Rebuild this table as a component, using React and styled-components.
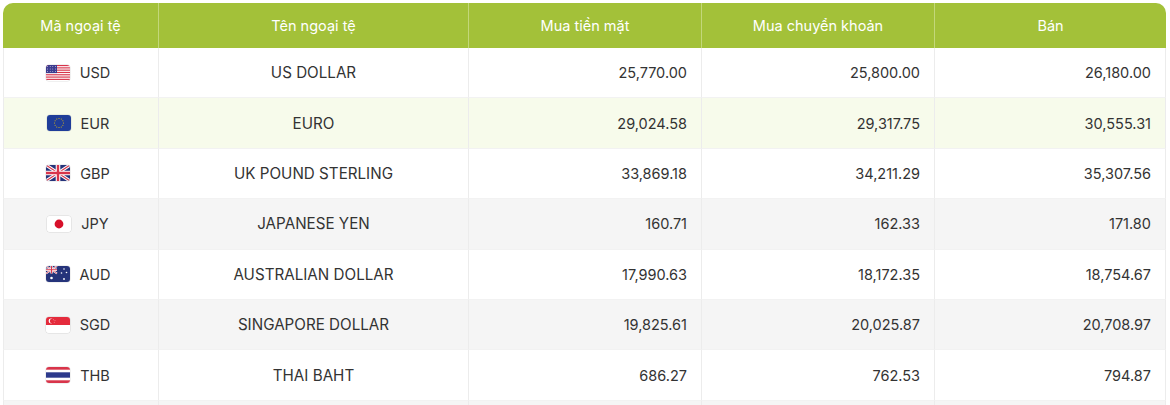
import React from 'react';
import styled, { createGlobalStyle } from 'styled-components';

const GlobalStyle = createGlobalStyle`
    body {
        margin: 0;
        background: #ffffff;
        font-family: Inter, "Noto Sans", sans-serif;
        overflow: hidden;
    }
`;

const Wrapper = styled.div`
    padding: 3px 4px 0 3px;
`;

const Table = styled.table`
    width: 100%;
    border-collapse: separate;
    border-spacing: 0;
    table-layout: fixed;
    color: #333333;
    font-size: 14.5px;
`;

const Th = styled.th`
    background: #a3c139;
    color: #ffffff;
    font-weight: 400;
    height: 45px;
    padding: 0 12px;
    text-align: center;
    border-left: 1px solid #c3d77a;

    &:first-child {
        border-left: none;
        border-top-left-radius: 10px;
    }
    &:last-child {
        border-top-right-radius: 10px;
    }
`;

const Row = styled.tr`
    background: ${(p) => p.$bg};
`;

const Td = styled.td`
    height: 50.4px;
    padding: 0 14px;
    text-align: ${(p) => (p.$right ? 'right' : 'center')};
    font-size: ${(p) => (p.$wide ? '15.2px' : '14.5px')};
    border-left: 1px solid #ececec;
    border-bottom: 1px solid #f2f2f2;
    box-sizing: border-box;

    &:last-child {
        border-right: 1px solid #ececec;
    }
`;

const Code = styled.div`
    display: flex;
    align-items: center;
    justify-content: center;
    gap: 10px;
    padding-right: 6px;
`;

const FlagBox = styled.span`
    width: 24px;
    height: 16px;
    border-radius: 3px;
    overflow: hidden;
    display: inline-flex;
    box-shadow: 0 0 0 0.5px rgba(0, 0, 0, 0.12);

    svg {
        width: 24px;
        height: 16px;
        display: block;
    }
`;

const Us = () => (
    <svg viewBox="0 0 24 16">
        {Array.from({ length: 7 }).map((_, i) => (
            <rect key={i} x="0" y={i * 2.3} width="24" height="1.15" fill="#d8344a" />
        ))}
        <rect x="0" y="0" width="11" height="8.1" fill="#3c3b8f" />
        {Array.from({ length: 12 }).map((_, i) => (
            <circle key={i} cx={1.6 + (i % 4) * 2.6} cy={1.5 + Math.floor(i / 4) * 2.5} r="0.45" fill="#fff" />
        ))}
    </svg>
);

const Eu = () => (
    <svg viewBox="0 0 24 16">
        <rect width="24" height="16" fill="#1f3d99" />
        {Array.from({ length: 12 }).map((_, i) => {
            const a = (i / 12) * Math.PI * 2;
            return <circle key={i} cx={12 + Math.cos(a) * 4.5} cy={8 + Math.sin(a) * 4.5} r="0.5" fill="#f5c400" />;
        })}
    </svg>
);

const Gb = () => (
    <svg viewBox="0 0 24 16">
        <rect width="24" height="16" fill="#25337a" />
        <path d="M0 0L24 16M24 0L0 16" stroke="#fff" strokeWidth="3.2" />
        <path d="M0 0L24 16M24 0L0 16" stroke="#d8344a" strokeWidth="1.1" />
        <path d="M12 0V16M0 8H24" stroke="#fff" strokeWidth="4.6" />
        <path d="M12 0V16M0 8H24" stroke="#d8344a" strokeWidth="2.4" />
    </svg>
);

const Jp = () => (
    <svg viewBox="0 0 24 16">
        <rect width="24" height="16" fill="#fff" />
        <circle cx="12" cy="8" r="4.4" fill="#d7102a" />
    </svg>
);

const Au = () => (
    <svg viewBox="0 0 24 16">
        <rect width="24" height="16" fill="#25337a" />
        <path d="M0 0L11 7.5M11 0L0 7.5" stroke="#fff" strokeWidth="1.8" />
        <path d="M0 0L11 7.5M11 0L0 7.5" stroke="#d8344a" strokeWidth="0.7" />
        <path d="M5.5 0V7.5M0 3.75H11" stroke="#fff" strokeWidth="2.4" />
        <path d="M5.5 0V7.5M0 3.75H11" stroke="#d8344a" strokeWidth="1.2" />
        <circle cx="5.5" cy="12" r="1.3" fill="#fff" />
        <circle cx="18" cy="3" r="0.8" fill="#fff" />
        <circle cx="15.5" cy="7" r="0.8" fill="#fff" />
        <circle cx="20.5" cy="6.5" r="0.8" fill="#fff" />
        <circle cx="18" cy="13" r="0.9" fill="#fff" />
    </svg>
);

const Sg = () => (
    <svg viewBox="0 0 24 16">
        <rect width="24" height="8" fill="#e42b3c" />
        <rect y="8" width="24" height="8" fill="#fff" />
        <circle cx="5" cy="4" r="2.4" fill="#fff" />
        <circle cx="6" cy="4" r="2.2" fill="#e42b3c" />
        <circle cx="7.6" cy="2.8" r="0.4" fill="#fff" />
        <circle cx="9" cy="3.6" r="0.4" fill="#fff" />
        <circle cx="8.2" cy="5.2" r="0.4" fill="#fff" />
    </svg>
);

const Th_ = () => (
    <svg viewBox="0 0 24 16">
        <rect width="24" height="16" fill="#d8344a" />
        <rect y="2.7" width="24" height="10.6" fill="#fff" />
        <rect y="5.3" width="24" height="5.4" fill="#2d3a8c" />
    </svg>
);

const rows = [
    { code: 'USD', name: 'US DOLLAR', flag: Us, cash: '25,770.00', transfer: '25,800.00', sell: '26,180.00' },
    { code: 'EUR', name: 'EURO', flag: Eu, cash: '29,024.58', transfer: '29,317.75', sell: '30,555.31' },
    { code: 'GBP', name: 'UK POUND STERLING', flag: Gb, cash: '33,869.18', transfer: '34,211.29', sell: '35,307.56' },
    { code: 'JPY', name: 'JAPANESE YEN', flag: Jp, cash: '160.71', transfer: '162.33', sell: '171.80' },
    { code: 'AUD', name: 'AUSTRALIAN DOLLAR', flag: Au, cash: '17,990.63', transfer: '18,172.35', sell: '18,754.67' },
    { code: 'SGD', name: 'SINGAPORE DOLLAR', flag: Sg, cash: '19,825.61', transfer: '20,025.87', sell: '20,708.97' },
    { code: 'THB', name: 'THAI BAHT', flag: Th_, cash: '686.27', transfer: '762.53', sell: '794.87' },
];

// row 2 is highlighted (hover), the rest alternate white / grey
const rowBg = (i) => {
    if (i === 1) return '#f7fbeb';
    return i % 2 === 0 ? '#ffffff' : '#f5f5f5';
};

export default function App() {
    return (
        <>
            <GlobalStyle />
            <Wrapper>
                <Table>
                    <colgroup>
                        <col style={{ width: 155 }} />
                        <col style={{ width: 310 }} />
                        <col style={{ width: 233 }} />
                        <col style={{ width: 233 }} />
                        <col />
                    </colgroup>
                    <thead>
                        <tr>
                            <Th>Mã ngoại tệ</Th>
                            <Th>Tên ngoại tệ</Th>
                            <Th>Mua tiền mặt</Th>
                            <Th>Mua chuyển khoản</Th>
                            <Th>Bán</Th>
                        </tr>
                    </thead>
                    <tbody>
                        {rows.map((r, i) => {
                            const Flag = r.flag;
                            return (
                                <Row key={r.code} $bg={rowBg(i)}>
                                    <Td>
                                        <Code>
                                            <FlagBox>
                                                <Flag />
                                            </FlagBox>
                                            {r.code}
                                        </Code>
                                    </Td>
                                    <Td $wide>{r.name}</Td>
                                    <Td $right>{r.cash}</Td>
                                    <Td $right>{r.transfer}</Td>
                                    <Td $right>{r.sell}</Td>
                                </Row>
                            );
                        })}
                        {/* next row, only its top edge shows in the frame */}
                        <Row $bg="#f5f5f5">
                            <Td />
                            <Td />
                            <Td />
                            <Td />
                            <Td />
                        </Row>
                    </tbody>
                </Table>
            </Wrapper>
        </>
    );
}
